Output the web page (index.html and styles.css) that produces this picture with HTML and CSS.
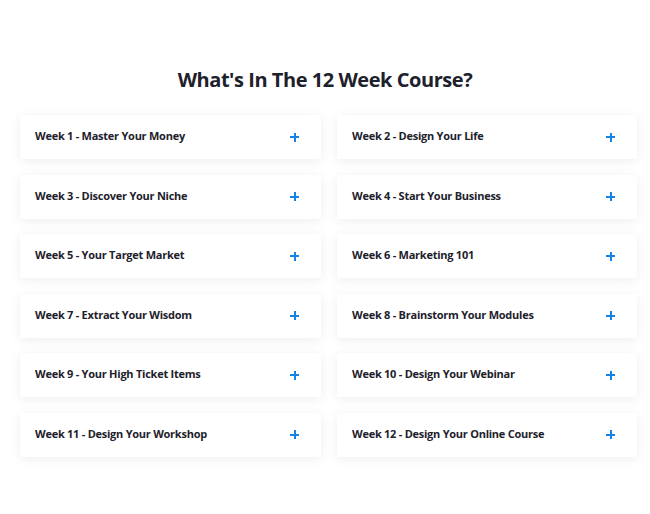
FILE: index.html
```html
<!DOCTYPE html>
<html lang="en">
<head>
  <meta charset="UTF-8">
  <title>12 Week Course</title>
  <link rel="stylesheet" href="styles.css">
</head>
<body>

  <section class="curso">
    <h2 class="curso-titulo">What's In The 12 Week Course?</h2>

    <div class="semanas">
      <div class="semana"><span>Week 1 - Master Your Money</span><i class="mas"></i></div>
      <div class="semana"><span>Week 2 - Design Your Life</span><i class="mas"></i></div>
      <div class="semana"><span>Week 3 - Discover Your Niche</span><i class="mas"></i></div>
      <div class="semana"><span>Week 4 - Start Your Business</span><i class="mas"></i></div>
      <div class="semana"><span>Week 5 - Your Target Market</span><i class="mas"></i></div>
      <div class="semana"><span>Week 6 - Marketing 101</span><i class="mas"></i></div>
      <div class="semana"><span>Week 7 - Extract Your Wisdom</span><i class="mas"></i></div>
      <div class="semana"><span>Week 8 - Brainstorm Your Modules</span><i class="mas"></i></div>
      <div class="semana"><span>Week 9 - Your High Ticket Items</span><i class="mas"></i></div>
      <div class="semana"><span>Week 10 - Design Your Webinar</span><i class="mas"></i></div>
      <div class="semana"><span>Week 11 - Design Your Workshop</span><i class="mas"></i></div>
      <div class="semana"><span>Week 12 - Design Your Online Course</span><i class="mas"></i></div>
    </div>
  </section>

</body>
</html>
```

FILE: styles.css
```css
:root {
  --color-texto: #1d212b;
  --color-azul: #1583e4;
}

body {
  margin: 0;
  padding: 0;
  background: #fff;
  font-family: 'Open Sans', 'Liberation Sans', sans-serif;
  color: var(--color-texto);
}

.curso {
  padding: 68px 13px 40px 20px;
}

.curso-titulo {
  margin: 0 0 23px;
  font-size: 20px;
  line-height: 24px;
  font-weight: 700;
  letter-spacing: -0.45px;
  text-align: center;
  padding-right: 7px;
}

/* GRID DE SEMANAS */
.semanas {
  display: grid;
  grid-template-columns: 301px 300px;
  column-gap: 16px;
  row-gap: 15.5px;
}

.semana {
  height: 44px;
  display: flex;
  align-items: center;
  justify-content: space-between;
  padding: 0 22px 0 15px;
  background: #fff;
  border-radius: 2px;
  box-shadow: 0 2px 12px rgba(0,0,0,0.07);
  font-size: 11px;
  font-weight: 700;
  letter-spacing: -0.25px;
}

.semana span {
  margin-top: -3px;
}

/* icono + */
.mas {
  position: relative;
  width: 9px;
  height: 9px;
  flex: none;
}

.mas::before,
.mas::after {
  content: '';
  position: absolute;
  background: var(--color-azul);
}

.mas::before {
  left: 0;
  top: 3.5px;
  width: 9px;
  height: 2px;
}

.mas::after {
  left: 3.5px;
  top: 0;
  width: 2px;
  height: 9px;
}
```
